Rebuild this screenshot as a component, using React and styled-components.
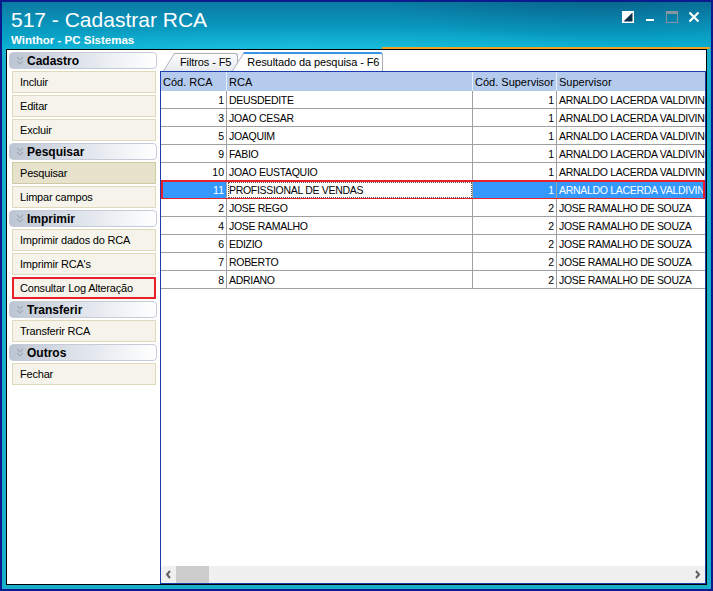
import React from 'react';
import styled, { createGlobalStyle } from 'styled-components';

const GlobalStyle = createGlobalStyle`
  html, body {
    margin: 0;
    padding: 0;
    background: #ffffff;
  }
  body {
    font-family: "Liberation Sans", Arial, sans-serif;
  }
`;

const Window = styled.div`
  width: 713px;
  height: 591px;
  box-sizing: border-box;
  border: 2px solid #0b1a8c;
  background: #17afc9;
  display: flex;
  flex-direction: column;
  overflow: hidden;
`;

const TitleBar = styled.div`
  height: 47px;
  flex: none;
  display: flex;
  flex-direction: column;
  background:
    radial-gradient(ellipse 300px 70px at 600px -10px, rgba(0, 55, 95, 0.35), transparent 75%),
    radial-gradient(ellipse 520px 38px at 300px 52px, rgba(60, 215, 240, 0.45), transparent 72%),
    linear-gradient(180deg, #0b7ba3 0%, #0a93ba 45%, #06afd1 100%);
`;

const TitleRow = styled.div`
  flex: 1;
  display: flex;
  justify-content: space-between;
`;

const TitleText = styled.div`
  padding: 6px 0 0 9px;
  color: #ffffff;
`;

const Title = styled.div`
  font-size: 21px;
  line-height: 24px;
`;

const SubTitle = styled.div`
  margin-top: 1px;
  font-size: 11.5px;
  line-height: 14px;
  font-weight: bold;
`;

const Controls = styled.div`
  display: flex;
  gap: 10px;
  padding: 9px 11px 0 0;
  height: 12px;
`;

const Accent = styled.div`
  align-self: flex-end;
  width: 328px;
  height: 2px;
  margin: 0 1px 0 0;
  background: #e9a126;
`;

const Content = styled.div`
  flex: 1;
  margin: 0 4px 4px 4px;
  border: 1px solid #000000;
  background: #ffffff;
  display: flex;
  min-height: 0;
`;

const Sidebar = styled.div`
  width: 153px;
  flex: none;
  box-sizing: border-box;
  padding: 2px 0 0 2px;
  display: flex;
  flex-direction: column;
  gap: 2px;
`;

const GroupHeader = styled.div`
  width: 148px;
  height: 17px;
  box-sizing: border-box;
  border: 1px solid #c5ccd8;
  border-radius: 4px;
  background: linear-gradient(90deg, #bcc5d3 0%, #dde2ea 45%, #ffffff 100%);
  display: flex;
  align-items: center;
  gap: 3px;
  padding-left: 6px;
  font-size: 12px;
  font-weight: bold;
  color: #000000;
`;

const Item = styled.div`
  width: 144px;
  height: 22px;
  margin-left: 3px;
  box-sizing: border-box;
  border: ${p => (p.$flag ? '2px solid #e8202a' : p.$pressed ? '1px solid #cfcaa6' : '1px solid #dedabb')};
  background: ${p => (p.$pressed ? '#e6e2cc' : '#f6f4ea')};
  display: flex;
  align-items: center;
  padding-left: ${p => (p.$flag ? 6 : 7)}px;
  font-size: 11px;
  letter-spacing: -0.2px;
  color: #000000;
`;

const Main = styled.div`
  flex: 1;
  min-width: 0;
  display: flex;
  flex-direction: column;
  padding-top: 2px;
`;

const TabStrip = styled.div`
  height: 19px;
  flex: none;
  display: flex;
  align-items: flex-end;
  padding-left: 15px;
`;

const Tab = styled.div`
  position: relative;
  z-index: ${p => (p.$active ? 2 : 1)};
  height: ${p => (p.$active ? 19 : 18)}px;
  box-sizing: border-box;
  margin-left: ${p => (p.$active ? 6 : 0)}px;
  padding: 0 ${p => (p.$active ? 3 : 6)}px 0 ${p => (p.$active ? 3 : 5)}px;
  font-size: 11px;
  letter-spacing: -0.1px;
  line-height: ${p => (p.$active ? 16 : 17)}px;
  color: #000000;
  background: ${p => (p.$active ? '#ffffff' : 'linear-gradient(180deg, #fdfdfd, #e8eaee)')};
  border-top: ${p => (p.$active ? '2px solid #3c94e4' : '1px solid #a8afba')};
  border-right: 1px solid #a8afba;
  border-top-right-radius: 3px;

  &::before {
    content: '';
    position: absolute;
    top: ${p => (p.$active ? -2 : -1)}px;
    bottom: 0;
    left: -12px;
    width: 16px;
    z-index: -1;
    background: inherit;
    border-top: inherit;
    border-left: 1px solid #a8afba;
    transform: skewX(-32deg);
    transform-origin: bottom left;
  }
`;

const Grid = styled.div`
  flex: 1;
  min-height: 0;
  border: 1px solid #1c3db2;
  display: flex;
  flex-direction: column;
  overflow: hidden;
`;

const Rows = styled.div`
  flex: 1;
`;

const cols = '66px 246px 84px 1fr';

const HeaderRow = styled.div`
  display: grid;
  grid-template-columns: ${cols};
  height: 19px;
  background: #b4cbee;
`;

const HeaderCell = styled.div`
  border-right: 1px solid #e4ecf8;
  padding-left: 2px;
  font-size: 11px;
  line-height: 20px;
  white-space: nowrap;
  overflow: hidden;
  &:last-child {
    border-right: none;
  }
`;

const Row = styled.div`
  position: relative;
  display: grid;
  grid-template-columns: ${cols};
  height: 18px;

  &::after {
    content: ${p => (p.$selected ? "''" : 'none')};
    position: absolute;
    top: -1px;
    bottom: -1px;
    left: 0;
    right: 0;
    border: 2px solid #e8202a;
    pointer-events: none;
  }
`;

const Cell = styled.div`
  box-sizing: border-box;
  border-right: 1px solid #a0a0a0;
  border-bottom: 1px solid #a0a0a0;
  background: ${p => (p.$hl ? '#3399ff' : '#ffffff')};
  color: ${p => (p.$hl ? '#ffffff' : '#000000')};
  outline: ${p => (p.$focus ? '1px dotted #555555' : 'none')};
  outline-offset: -2px;
  padding: 1px ${p => (p.$num ? 2 : 0)}px 0 2px;
  text-align: ${p => (p.$num ? 'right' : 'left')};
  font-size: 10.5px;
  letter-spacing: ${p => (p.$num ? 0 : -0.3)}px;
  line-height: 17px;
  white-space: nowrap;
  overflow: hidden;
  &:last-child {
    border-right: none;
  }
`;

const ScrollBar = styled.div`
  height: 17px;
  flex: none;
  background: #f0f0f0;
  display: flex;
  align-items: stretch;
`;

const ScrollArrow = styled.div`
  width: 15px;
  display: flex;
  align-items: center;
  justify-content: center;
`;

const Track = styled.div`
  flex: 1;
  display: flex;
`;

const Thumb = styled.div`
  width: 33px;
  background: #cdcdcd;
`;

const Chevrons = () => (
  <svg width="8" height="9" viewBox="0 0 8 9">
    <polyline points="1,1 4,4 7,1" fill="none" stroke="#a3abb9" strokeWidth="1.2" />
    <polyline points="1,5 4,8 7,5" fill="none" stroke="#a3abb9" strokeWidth="1.2" />
  </svg>
);

const Arrow = ({ dir }) => (
  <svg width="7" height="9" viewBox="0 0 7 9">
    <polyline
      points={dir === 'left' ? '5,1 2,4.5 5,8' : '2,1 5,4.5 2,8'}
      fill="none"
      stroke="#606060"
      strokeWidth="2"
    />
  </svg>
);

const groups = [
  { title: 'Cadastro', items: ['Incluir', 'Editar', 'Excluir'] },
  { title: 'Pesquisar', items: ['Pesquisar', 'Limpar campos'] },
  { title: 'Imprimir', items: ['Imprimir dados do RCA', "Imprimir RCA's", 'Consultar Log Alteração'] },
  { title: 'Transferir', items: ['Transferir RCA'] },
  { title: 'Outros', items: ['Fechar'] },
];

const sup1 = 'ARNALDO LACERDA VALDIVINO';
const sup2 = 'JOSE RAMALHO DE SOUZA';

const rows = [
  [1, 'DEUSDEDITE', 1, sup1],
  [3, 'JOAO CESAR', 1, sup1],
  [5, 'JOAQUIM', 1, sup1],
  [9, 'FABIO', 1, sup1],
  [10, 'JOAO EUSTAQUIO', 1, sup1],
  [11, 'PROFISSIONAL DE VENDAS', 1, sup1],
  [2, 'JOSE REGO', 2, sup2],
  [4, 'JOSE RAMALHO', 2, sup2],
  [6, 'EDIZIO', 2, sup2],
  [7, 'ROBERTO', 2, sup2],
  [8, 'ADRIANO', 2, sup2],
];

export default function App() {
  return (
    <>
      <GlobalStyle />
      <Window>
        <TitleBar>
          <TitleRow>
            <TitleText>
              <Title>517 - Cadastrar RCA</Title>
              <SubTitle>Winthor - PC Sistemas</SubTitle>
            </TitleText>
            <Controls>
              <svg width="12" height="12" viewBox="0 0 12 12">
                <rect x="0" y="0" width="12" height="12" fill="#ffffff" />
                <polygon points="10.5,1.5 10.5,10.5 1.5,10.5" fill="#0a2e48" />
              </svg>
              <svg width="12" height="12" viewBox="0 0 12 12">
                <rect x="2" y="8" width="8" height="2" fill="#ffffff" />
              </svg>
              <svg width="12" height="12" viewBox="0 0 12 12">
                <rect x="0.5" y="0.5" width="11" height="11" fill="none" stroke="#8496a0" />
                <rect x="0" y="0" width="12" height="3" fill="#8496a0" />
              </svg>
              <svg width="12" height="12" viewBox="0 0 12 12">
                <path d="M1.5 1.5 L10.5 10.5 M10.5 1.5 L1.5 10.5" stroke="#ffffff" strokeWidth="2.2" />
              </svg>
            </Controls>
          </TitleRow>
          <Accent />
        </TitleBar>
        <Content>
          <Sidebar>
            {groups.map(g => (
              <React.Fragment key={g.title}>
                <GroupHeader>
                  <Chevrons />
                  {g.title}
                </GroupHeader>
                {g.items.map(it => (
                  <Item
                    key={it}
                    $pressed={it === 'Pesquisar'}
                    $flag={it === 'Consultar Log Alteração'}
                  >
                    {it}
                  </Item>
                ))}
              </React.Fragment>
            ))}
          </Sidebar>
          <Main>
            <TabStrip>
              <Tab>Filtros - F5</Tab>
              <Tab $active>Resultado da pesquisa - F6</Tab>
            </TabStrip>
            <Grid>
              <Rows>
                <HeaderRow>
                  <HeaderCell>Cód. RCA</HeaderCell>
                  <HeaderCell>RCA</HeaderCell>
                  <HeaderCell>Cód. Supervisor</HeaderCell>
                  <HeaderCell>Supervisor</HeaderCell>
                </HeaderRow>
                {rows.map(([cod, nome, codSup, sup]) => {
                  const sel = cod === 11;
                  return (
                    <Row key={cod} $selected={sel}>
                      <Cell $num $hl={sel}>{cod}</Cell>
                      <Cell $focus={sel}>{nome}</Cell>
                      <Cell $num $hl={sel}>{codSup}</Cell>
                      <Cell $hl={sel}>{sup}</Cell>
                    </Row>
                  );
                })}
              </Rows>
              <ScrollBar>
                <ScrollArrow>
                  <Arrow dir="left" />
                </ScrollArrow>
                <Track>
                  <Thumb />
                </Track>
                <ScrollArrow>
                  <Arrow dir="right" />
                </ScrollArrow>
              </ScrollBar>
            </Grid>
          </Main>
        </Content>
      </Window>
    </>
  );
}
